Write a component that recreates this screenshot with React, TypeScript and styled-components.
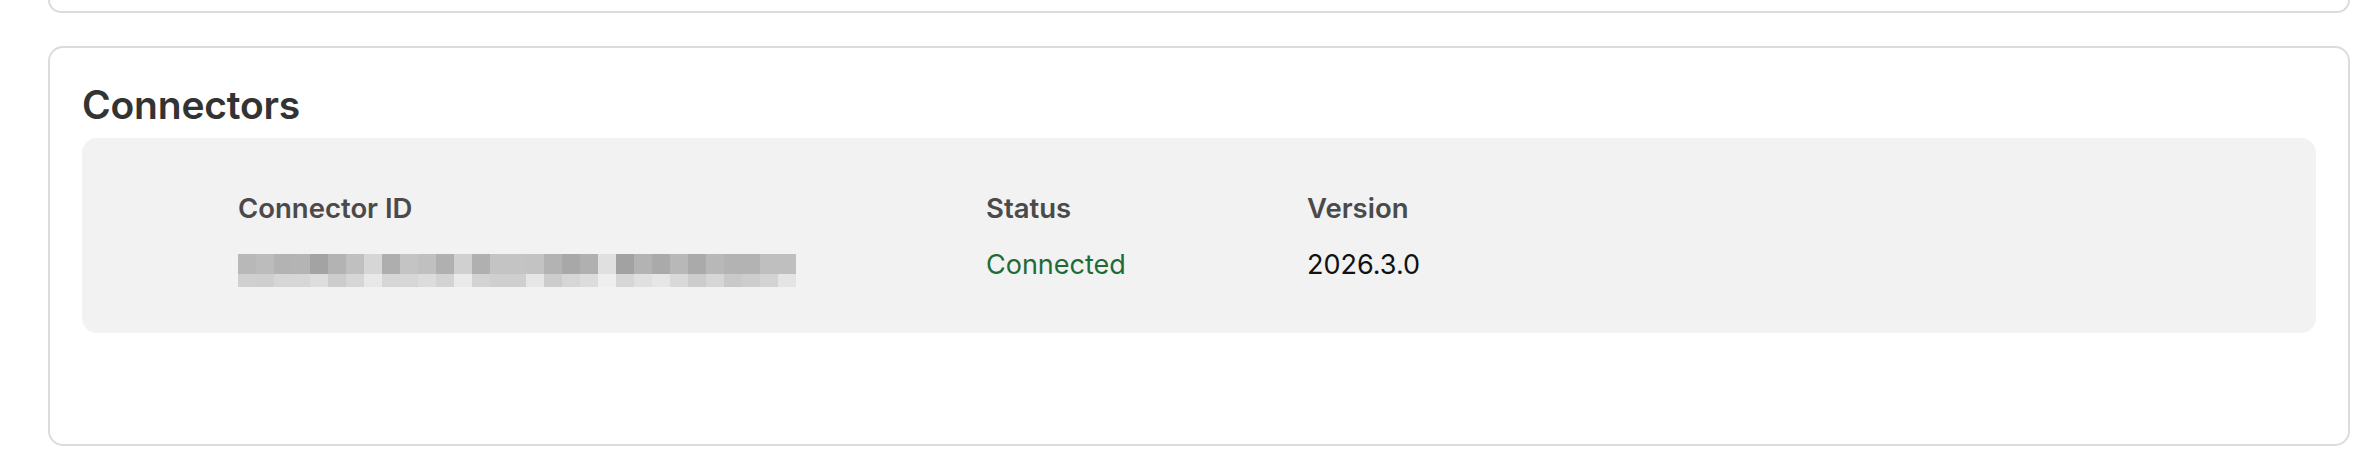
import React from "react";
import styled, { createGlobalStyle } from "styled-components";

const GlobalStyle = createGlobalStyle`
  html, body {
    margin: 0;
    padding: 0;
    background: #ffffff;
  }
  body {
    font-family: Inter, "Noto Sans", "Liberation Sans", sans-serif;
    -webkit-font-smoothing: antialiased;
  }
`;

const Page = styled.div`
  display: flex;
  flex-direction: column;
  gap: 33px;
  padding: 0 24px 28px 48px;
`;

const PrevCardTail = styled.div`
  height: 11px;
  border: 2px solid #dcdcdc;
  border-top: none;
  border-radius: 0 0 15px 15px;
  background: #ffffff;
`;

const Card = styled.section`
  border: 2px solid #dcdcdc;
  border-radius: 15px;
  background: #ffffff;
  padding: 33px 32px 111px 32px;
  display: flex;
  flex-direction: column;
`;

const Title = styled.h2`
  margin: 0 0 10px 0;
  font-size: 39px;
  line-height: 47px;
  font-weight: 600;
  color: #333333;
  letter-spacing: -0.2px;
`;

const Panel = styled.div`
  background: #f2f2f2;
  border-radius: 15px;
  padding: 49.5px 32px 48.5px 156px;
`;

const Table = styled.div`
  display: grid;
  grid-template-columns: 748px 321px 1fr;
  row-gap: 17px;
  align-items: start;
`;

const HeadCell = styled.div`
  font-size: 27.5px;
  line-height: 40px;
  font-weight: 600;
  color: #4a4a4a;
`;

const ValueCell = styled.div<{ $tone?: "green" | "dark" }>`
  font-size: 27px;
  line-height: 40px;
  font-weight: 400;
  color: ${(p) => (p.$tone === "green" ? "#1f6b38" : "#111111")};
  height: 40px;
`;

const Pixelated = styled.div`
  display: flex;
  flex-direction: column;
  margin-top: 9px;
  width: 558px;
`;

const PixelRow = styled.div<{ $h: number }>`
  display: flex;
  height: ${(p) => p.$h}px;
`;

const Pixel = styled.span`
  display: block;
  width: 18px;
  flex: 0 0 18px;
  height: 100%;
`;

const topRow = [
  "#b8b8b8", "#bcbcbc", "#b3b3b3", "#b4b4b4", "#a3a3a3", "#b3b3b3", "#c0c0c0", "#d6d6d6",
  "#aeaeae", "#c4c4c4", "#c0c0c0", "#b0b0b0", "#d0d0d0", "#b0b0b0", "#c4c4c4", "#c4c4c4",
  "#c3c3c3", "#b3b3b3", "#a8a8a8", "#b0b0b0", "#e0e0e0", "#a2a2a2", "#b3b3b3", "#aaaaaa",
  "#b8b8b8", "#aaaaaa", "#b8b8b8", "#b3b3b3", "#b3b3b3", "#bfbfbf", "#bfbfbf",
];
const bottomRow = [
  "#d0d0d0", "#cfcfcf", "#d6d6d6", "#d6d6d6", "#dddddd", "#cccccc", "#d6d6d6", "#e8e8e8",
  "#d6d6d6", "#d6d6d6", "#dcdcdc", "#d3d3d3", "#eaeaea", "#d3d3d3", "#cfcfcf", "#cfcfcf",
  "#e6e6e6", "#cccccc", "#d6d6d6", "#dcdcdc", "#eeeeee", "#d6d6d6", "#e0e0e0", "#e6e6e6",
  "#d9d9d9", "#cccccc", "#d6d6d6", "#c9c9c9", "#cdcdcd", "#d3d3d3", "#e4e4e4",
];

function BlurredId() {
  return (
    <Pixelated aria-label="Connector ID (redacted)">
      <PixelRow $h={20}>
        {topRow.map((c, i) => (
          <Pixel key={i} style={{ background: c }} />
        ))}
      </PixelRow>
      <PixelRow $h={13}>
        {bottomRow.map((c, i) => (
          <Pixel key={i} style={{ background: c }} />
        ))}
      </PixelRow>
    </Pixelated>
  );
}

export default function App() {
  return (
    <>
      <GlobalStyle />
      <Page>
        <PrevCardTail />
        <Card>
          <Title>Connectors</Title>
          <Panel>
            <Table>
              <HeadCell>Connector ID</HeadCell>
              <HeadCell>Status</HeadCell>
              <HeadCell>Version</HeadCell>
              <ValueCell>
                <BlurredId />
              </ValueCell>
              <ValueCell $tone="green">Connected</ValueCell>
              <ValueCell $tone="dark">2026.3.0</ValueCell>
            </Table>
          </Panel>
        </Card>
      </Page>
    </>
  );
}
